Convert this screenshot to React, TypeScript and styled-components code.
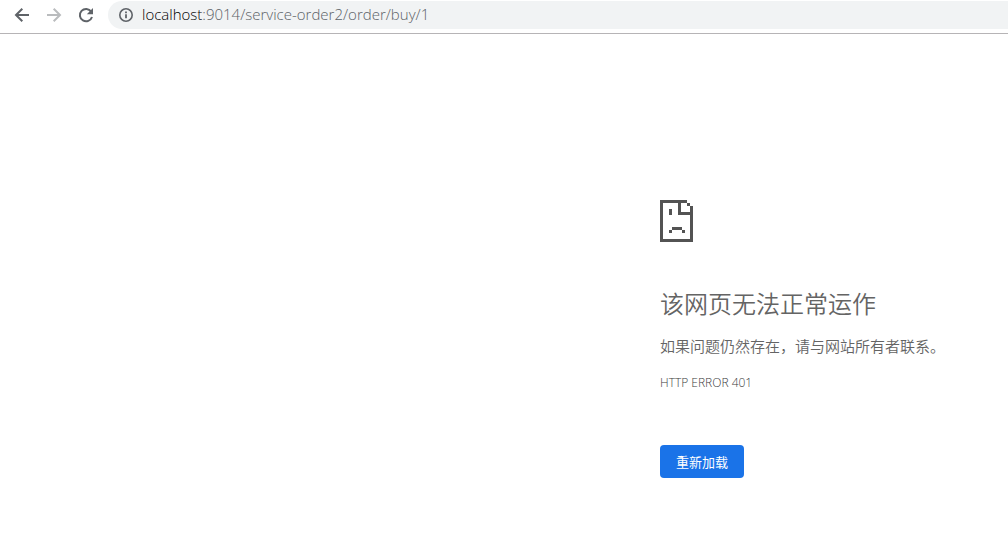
import React from 'react';
import styled, { createGlobalStyle } from 'styled-components';

const GlobalStyle = createGlobalStyle`
  * { box-sizing: border-box; }
  body {
    margin: 0;
    background: #fff;
    font-family: "Open Sans", "Noto Sans CJK SC", sans-serif;
  }
`;

const Toolbar = styled.header`
  display: flex;
  align-items: center;
  gap: 12px;
  height: 34px;
  padding: 0 0 4px 12px;
  border-bottom: 1px solid #b6b4b6;
`;

const NavButton = styled.button`
  display: flex;
  flex: none;
  width: 20px;
  height: 20px;
  padding: 0;
  border: 0;
  background: none;
  color: #5f6368;
  &:disabled { color: #babcbe; }
`;

const AddressBar = styled.div`
  display: flex;
  flex: 1;
  align-items: center;
  gap: 8px;
  min-width: 0;
  height: 28px;
  padding-left: 10px;
  border-radius: 14px 0 0 14px;
  background: #f1f3f4;
  color: #5f6368;
`;

const Address = styled.a`
  padding-bottom: 2px;
  font-size: 15px;
  font-weight: 350;
  line-height: 20px;
  white-space: nowrap;
  text-decoration: none;
  color: #5c6267;
`;

const Host = styled.span`
  color: #000;
`;

const ErrorPage = styled.main`
  display: flex;
  flex-direction: column;
  align-items: flex-start;
  width: 348px;
  max-width: 100%;
  margin-left: auto;
  padding: 166px 16px 56px 0;
  color: #646464;
`;

const Title = styled.h1`
  margin: 44px 0 0;
  font-size: 24px;
  font-weight: 350;
  line-height: 36px;
`;

const Message = styled.p`
  margin: 12px 0 0;
  font-size: 15px;
  font-weight: 350;
  line-height: 24px;
  white-space: nowrap;
`;

const ErrorCode = styled.p`
  margin: 17px 0 0;
  font-size: 12px;
  font-weight: 350;
  line-height: 16px;
  color: #3c3c3c;
`;

const ReloadButton = styled.button`
  height: 33px;
  margin-top: 54px;
  padding: 0 16px;
  border: 0;
  border-radius: 4px;
  background: #1a73e8;
  color: #fff;
  font-family: inherit;
  font-size: 13px;
  line-height: 20px;
`;

const BackIcon = () => (
  <svg width="20" height="20" viewBox="0 0 20 20" fill="none" stroke="currentColor" strokeWidth="2" aria-hidden="true">
    <path d="M17 10H4M10.3 3.7L4 10l6.3 6.3" />
  </svg>
);

const ForwardIcon = () => (
  <svg width="20" height="20" viewBox="0 0 20 20" fill="none" stroke="currentColor" strokeWidth="2" aria-hidden="true">
    <path d="M3 10h13M9.7 3.7L16 10l-6.3 6.3" />
  </svg>
);

const ReloadIcon = () => (
  <svg width="20" height="20" viewBox="0 0 20 20" aria-hidden="true">
    <path d="M15.2 6.6A6.2 6.2 0 1 0 16 12" fill="none" stroke="currentColor" strokeWidth="2" />
    <path d="M17 3v6.2h-6.2z" fill="currentColor" />
  </svg>
);

const InfoIcon = () => (
  <svg width="16" height="16" viewBox="0 0 16 16" aria-hidden="true">
    <circle cx="8" cy="8" r="6.2" fill="none" stroke="currentColor" strokeWidth="1.6" />
    <path d="M7.1 7.2h1.8v4H7.1zM7.1 4.5h1.8v1.7H7.1z" fill="currentColor" />
  </svg>
);

const SadPage = () => (
  <svg width="33" height="42" viewBox="0 0 33 42" shapeRendering="crispEdges" fill="#535353" role="img" aria-label="Error">
    <path d="M0 0h27v3H0zM0 3h3v36H0zM0 39h33v3H0zM30 6h3v33h-3zM27 3h3v3h-3zM18 3h3v12h-3zM21 12h9v3h-9zM9 9h3v6H9zM12 27h10v3H12zM9 30h3v3H9zM22 30h3v3h-3z" />
  </svg>
);

export default function App() {
  return (
    <>
      <GlobalStyle />
      <Toolbar>
        <NavButton aria-label="Back"><BackIcon /></NavButton>
        <NavButton aria-label="Forward" disabled><ForwardIcon /></NavButton>
        <NavButton aria-label="Reload"><ReloadIcon /></NavButton>
        <AddressBar>
          <InfoIcon />
          <Address href="#"><Host>localhost</Host>:9014/service-order2/order/buy/1</Address>
        </AddressBar>
      </Toolbar>
      <ErrorPage lang="zh-CN">
        <SadPage />
        <Title>该网页无法正常运作</Title>
        <Message>如果问题仍然存在，请与网站所有者联系。</Message>
        <ErrorCode>HTTP ERROR 401</ErrorCode>
        <ReloadButton type="button">重新加载</ReloadButton>
      </ErrorPage>
    </>
  );
}
